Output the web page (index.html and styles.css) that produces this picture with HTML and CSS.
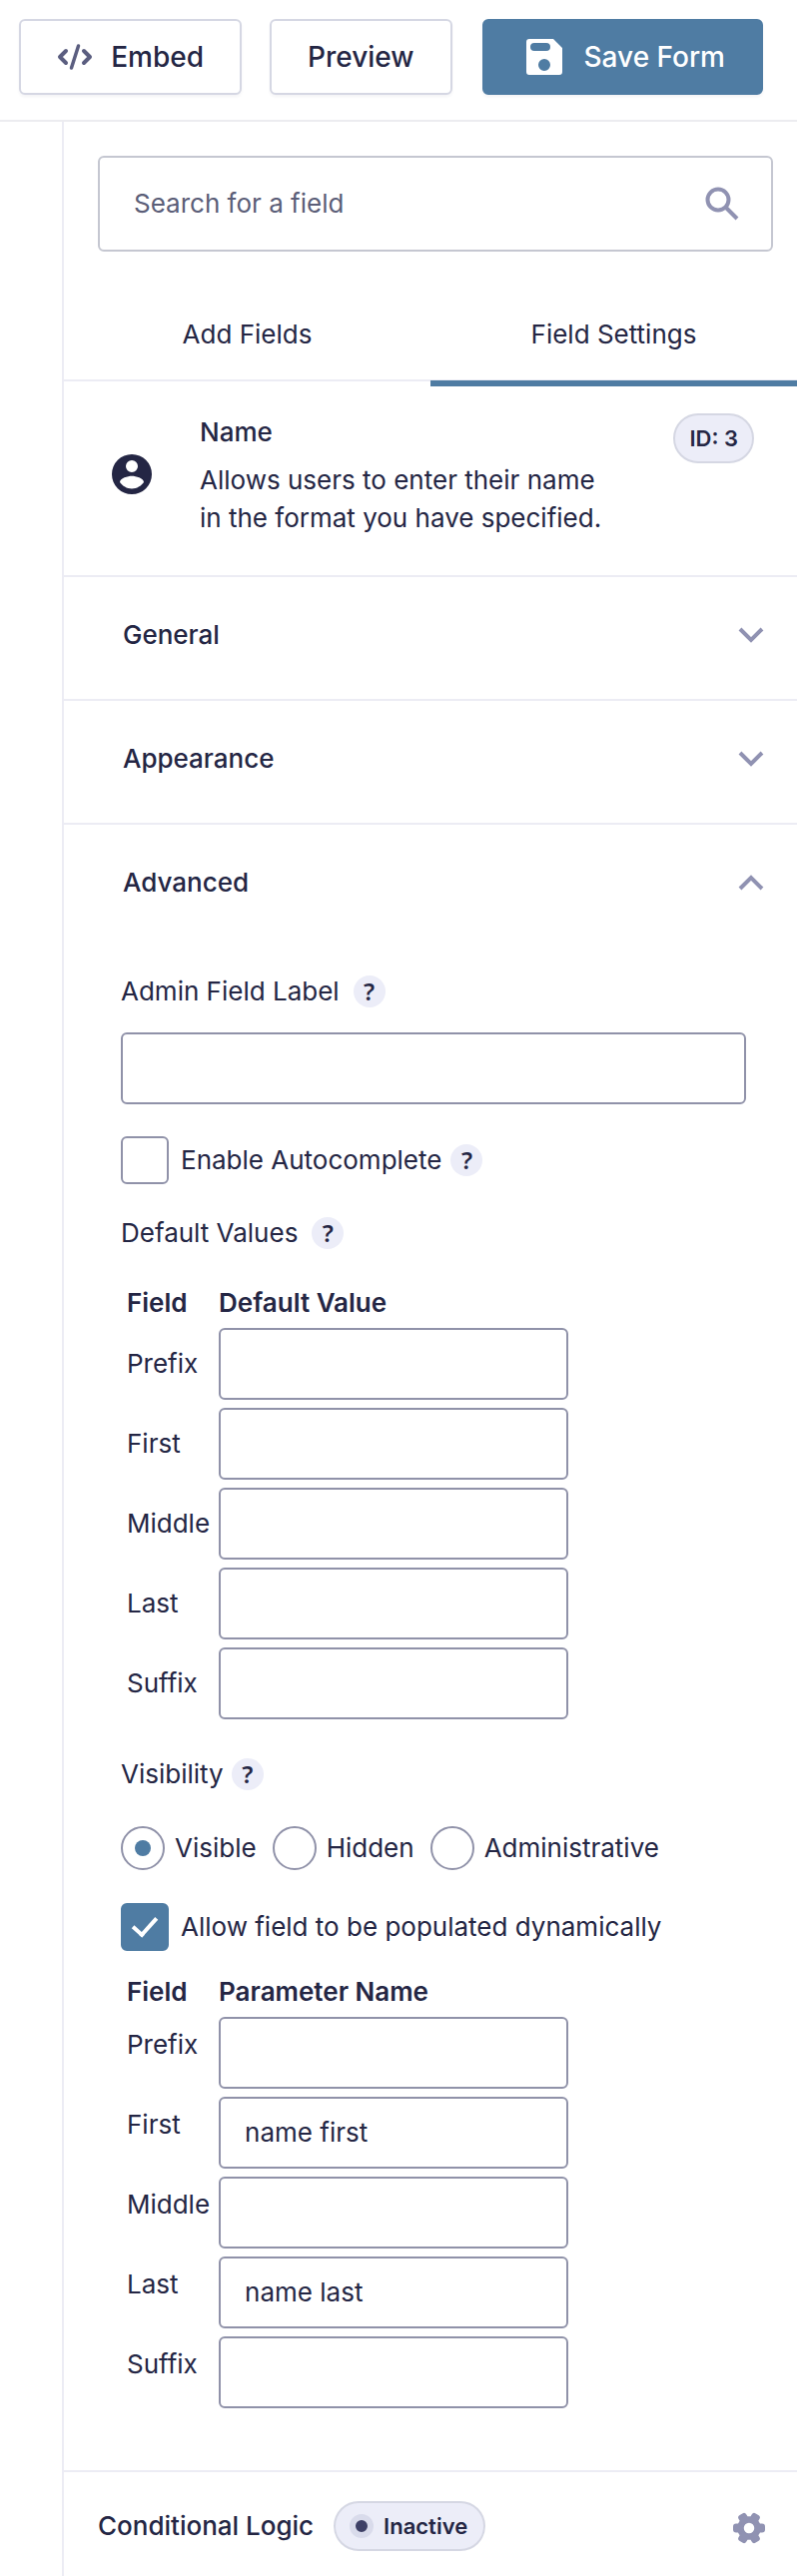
FILE: index.html
```html
<!DOCTYPE html>
<html lang="en">
<head>
<meta charset="utf-8">
<title>Form Editor</title>
<link rel="stylesheet" href="styles.css">
</head>
<body>
<header class="toolbar">
  <button type="button" class="btn btn-embed">
    <svg class="icon-code" width="36" height="28" viewBox="0 0 36 28" fill="none" stroke="currentColor" stroke-width="4" stroke-linecap="round" stroke-linejoin="round"><path d="M9 8 3 14l6 6M27 8l6 6-6 6"/><path d="M21.500 3l-7 22" stroke-width="3.500"/></svg>
    Embed
  </button>
  <button type="button" class="btn">Preview</button>
  <button type="button" class="btn btn-primary">
    <svg width="36" height="36" viewBox="0 0 36 36"><path fill="currentColor" fill-rule="evenodd" d="M3 0H27L36 9V33a3 3 0 0 1-3 3H3a3 3 0 0 1-3-3V3a3 3 0 0 1 3-3ZM8 4a4 4 0 0 0 0 8H20a4 4 0 0 0 0-8ZM18 20a6 6 0 1 0 0 12a6 6 0 0 0 0-12Z"/></svg>
    Save Form
  </button>
</header>
<main class="sidebar">
  <div class="search">
    <input type="search" class="search-input" placeholder="Search for a field" aria-label="Search for a field">
    <svg width="34" height="34" viewBox="0 0 34 34" fill="none" stroke="currentColor" stroke-width="4"><circle cx="13" cy="13" r="10.500"/><path d="M20.500 20.500 32 32"/></svg>
  </div>
  <div class="tabs" role="tablist">
    <button type="button" class="tab" role="tab" aria-selected="false">Add Fields</button>
    <button type="button" class="tab tab-active" role="tab" aria-selected="true">Field Settings</button>
  </div>
  <section class="field-info">
    <svg class="field-icon" width="40" height="40" viewBox="0 0 40 40"><path fill="currentColor" fill-rule="evenodd" d="M20 0a20 20 0 1 0 0 40a20 20 0 0 0 0-40ZM20 6a6 6 0 1 1 0 12a6 6 0 0 1 0-12ZM20 34.400c-5 0-9.400-2.600-12-6.400C8.100 24 16 21.800 20 21.800S31.900 24 32 28c-2.600 3.800-7 6.400-12 6.400Z"/></svg>
    <div class="field-text">
      <h2 class="field-name">Name</h2>
      <p class="field-desc">Allows users to enter their name in the format you have specified.</p>
    </div>
    <span class="badge">ID: 3</span>
  </section>
  <button type="button" class="section-head" aria-expanded="false">General
    <svg width="26" height="16" viewBox="0 0 26 16" fill="none" stroke="currentColor" stroke-width="4"><path d="m2 2 11 11L24 2"/></svg>
  </button>
  <button type="button" class="section-head" aria-expanded="false">Appearance
    <svg width="26" height="16" viewBox="0 0 26 16" fill="none" stroke="currentColor" stroke-width="4"><path d="m2 2 11 11L24 2"/></svg>
  </button>
  <button type="button" class="section-head" aria-expanded="true">Advanced
    <svg width="26" height="16" viewBox="0 0 26 16" fill="none" stroke="currentColor" stroke-width="4"><path d="M2 14 13 3l11 11"/></svg>
  </button>
  <section class="advanced">
    <div class="label-row">
      <label for="admin-label">Admin Field Label</label>
      <button type="button" class="help" aria-label="About Admin Field Label">?</button>
    </div>
    <input type="text" id="admin-label" class="text-input">
    <div class="check-row">
      <input type="checkbox" id="autocomplete" class="check">
      <label for="autocomplete">Enable Autocomplete</label>
      <button type="button" class="help" aria-label="About Autocomplete">?</button>
    </div>
    <div class="label-row defaults-label">
      <span>Default Values</span>
      <button type="button" class="help" aria-label="About Default Values">?</button>
    </div>
    <table class="values">
      <thead><tr><th>Field</th><th>Default Value</th></tr></thead>
      <tbody>
        <tr><td><label for="d-prefix">Prefix</label></td><td><input type="text" id="d-prefix" class="text-input"></td></tr>
        <tr><td><label for="d-first">First</label></td><td><input type="text" id="d-first" class="text-input"></td></tr>
        <tr><td><label for="d-middle">Middle</label></td><td><input type="text" id="d-middle" class="text-input"></td></tr>
        <tr><td><label for="d-last">Last</label></td><td><input type="text" id="d-last" class="text-input"></td></tr>
        <tr><td><label for="d-suffix">Suffix</label></td><td><input type="text" id="d-suffix" class="text-input"></td></tr>
      </tbody>
    </table>
    <div class="label-row visibility-label">
      <span id="visibility">Visibility</span>
      <button type="button" class="help" aria-label="About Visibility">?</button>
    </div>
    <div class="radios" role="radiogroup" aria-labelledby="visibility">
      <label class="radio-label"><input type="radio" name="visibility" class="radio" checked>Visible</label>
      <label class="radio-label"><input type="radio" name="visibility" class="radio">Hidden</label>
      <label class="radio-label"><input type="radio" name="visibility" class="radio">Administrative</label>
    </div>
    <div class="check-row">
      <input type="checkbox" id="dynamic" class="check" checked>
      <label for="dynamic">Allow field to be populated dynamically</label>
    </div>
    <table class="values parameters">
      <thead><tr><th>Field</th><th>Parameter Name</th></tr></thead>
      <tbody>
        <tr><td><label for="p-prefix">Prefix</label></td><td><input type="text" id="p-prefix" class="text-input"></td></tr>
        <tr><td><label for="p-first">First</label></td><td><input type="text" id="p-first" class="text-input" value="name first"></td></tr>
        <tr><td><label for="p-middle">Middle</label></td><td><input type="text" id="p-middle" class="text-input"></td></tr>
        <tr><td><label for="p-last">Last</label></td><td><input type="text" id="p-last" class="text-input" value="name last"></td></tr>
        <tr><td><label for="p-suffix">Suffix</label></td><td><input type="text" id="p-suffix" class="text-input"></td></tr>
      </tbody>
    </table>
  </section>
  <section class="conditional">
    <h2 class="conditional-title">Conditional Logic</h2>
    <span class="badge status"><span class="dot"></span>Inactive</span>
    <button type="button" class="gear" aria-label="Conditional Logic settings">
      <svg width="32" height="32" viewBox="0 0 32 32" fill="currentColor"><circle cx="16" cy="16" r="8.500" fill="none" stroke="currentColor" stroke-width="6.500"/><rect x="23" y="11.500" width="9" height="9" rx="3"/><rect x="23" y="11.500" width="9" height="9" rx="3" transform="rotate(60 16 16)"/><rect x="23" y="11.500" width="9" height="9" rx="3" transform="rotate(120 16 16)"/><rect x="23" y="11.500" width="9" height="9" rx="3" transform="rotate(180 16 16)"/><rect x="23" y="11.500" width="9" height="9" rx="3" transform="rotate(240 16 16)"/><rect x="23" y="11.500" width="9" height="9" rx="3" transform="rotate(300 16 16)"/></svg>
    </button>
  </section>
</main>
</body>
</html>
```
FILE: styles.css
```css
* { box-sizing: border-box; }
body {
  margin: 0;
  background: #fff;
  color: #242644;
  font: 400 26px/38px Inter, "Liberation Sans", sans-serif;
}
button, input { font: inherit; color: inherit; }
button { cursor: pointer; }
h2, p { margin: 0; }
svg { display: block; flex: none; }

.toolbar {
  display: flex;
  align-items: flex-start;
  justify-content: flex-end;
  gap: 28px;
  padding: 19px 34px 25px 16px;
  border-bottom: 2px solid #ececf0;
}
.btn {
  display: flex;
  align-items: center;
  height: 76px;
  padding: 0 36px;
  background: #fff;
  border: 2px solid #d5d7e3;
  border-radius: 6px;
  box-shadow: 0 2px 3px #2427480d;
  font-size: 28px;
  font-weight: 500;
  white-space: nowrap;
}
.btn-embed { gap: 18px; }
.icon-code { color: #5b5e80; }
.btn-primary {
  gap: 22px;
  margin-left: 2px;
  padding: 0 36px 0 42px;
  background: #4f7ca3;
  border-color: #4f7ca3;
  color: #fff;
}

.sidebar {
  margin-left: 62px;
  padding-top: 34px;
  border-left: 2px solid #ececf4;
}
.search {
  display: flex;
  align-items: center;
  height: 96px;
  margin: 0 24px 0 34px;
  padding: 0 32px 0 34px;
  border: 2px solid #c5c7d1;
  border-radius: 6px;
  color: #9092b2;
}
.search-input {
  flex: 1;
  min-width: 0;
  padding: 0;
  border: 0;
  outline: 0;
  background: none;
  color: #5b5e78;
}
.search-input::placeholder { color: #5b5e78; opacity: 1; }

.tabs {
  display: grid;
  grid-template-columns: 1fr 1fr;
  height: 130px;
  border-bottom: 2px solid #ececf4;
}
.tab {
  height: 135px;
  padding: 36px 0 0;
  border: 0;
  border-bottom: 6px solid transparent;
  background: none;
}
.tab-active { border-color: #4f7ca3; }

.field-info {
  display: flex;
  align-items: flex-start;
  height: 196px;
  padding: 32px 43px 0 48px;
  border-bottom: 2px solid #ececf4;
}
.field-icon { margin-top: 41px; }
.field-text { flex: 1; max-width: 410px; margin: 0 auto 0 48px; }
.field-name { font-size: 26px; font-weight: 500; line-height: 38px; margin-bottom: 10px; }
.badge {
  display: flex;
  align-items: center;
  height: 50px;
  padding: 0 14px;
  background: #ecedf8;
  border: 2px solid #d5d7e3;
  border-radius: 25px;
  font-size: 22px;
  font-weight: 600;
}

.section-head {
  display: flex;
  align-items: center;
  justify-content: space-between;
  width: 100%;
  height: 124px;
  padding: 0 33px 6px 59px;
  border: 0;
  border-bottom: 2px solid #ececf4;
  background: none;
  font-weight: 500;
}
.section-head[aria-expanded="true"] { border-color: transparent; }
.section-head svg { color: #9092b2; }

.advanced { padding: 24px 51px 58px 57px; }
.label-row { display: flex; align-items: center; gap: 14px; height: 38px; }
.help {
  width: 32px;
  height: 32px;
  padding: 0;
  border: 0;
  border-radius: 50%;
  background: #ecedf8;
  font-family: "Noto Sans", sans-serif;
  font-size: 24px;
  font-weight: 600;
  line-height: 30px;
}
.text-input {
  display: block;
  width: 100%;
  height: 72px;
  padding: 0 24px 2px;
  border: 2px solid #9092a9;
  border-radius: 6px;
  background: #fff;
}
.label-row + .text-input { margin-top: 22px; }
.check-row { display: flex; align-items: center; height: 48px; margin-top: 32px; }
.check, .radio {
  flex: none;
  appearance: none;
  width: 48px;
  height: 48px;
  margin: 0 12px 0 0;
  border: 2px solid #9092a9;
  border-radius: 6px;
  background: #fff;
}
.check:checked {
  display: grid;
  place-items: center;
  border-color: #4f7ca3;
  background: #4f7ca3;
}
.check:checked::before {
  content: "";
  width: 10px;
  height: 20px;
  margin-top: -6px;
  border: solid #fff;
  border-width: 0 4px 4px 0;
  transform: rotate(42deg);
}
.check-row .help { margin-left: 9px; }
.defaults-label { margin-top: 30px; }

.values { margin-top: 32px; border-spacing: 0; }
.values th { height: 40px; padding: 0 6px 2px; font-weight: 600; text-align: left; }
.values td { height: 80px; padding: 0 6px; }
.values th:last-child { padding: 0 0 2px; }
.values td:last-child { padding: 0; }
.values td:first-child { padding-right: 9px; }
.values .text-input { width: 350px; }
.parameters { margin-top: 22px; }
.parameters td { vertical-align: top; }
.parameters label { display: block; padding-top: 13px; }
.parameters .text-input { margin-top: 4px; }

.visibility-label { gap: 8px; margin-top: 32px; }
.radios { display: flex; gap: 16px; margin-top: 33px; }
.radio-label { display: flex; align-items: center; }
.radio { width: 44px; height: 44px; margin-right: 10px; border-radius: 50%; }
.radio:checked { display: grid; place-items: center; }
.radio:checked::before { content: ""; width: 16px; height: 16px; border-radius: 50%; background: #4f7ca3; }
.radios + .check-row { margin-top: 33px; }

.conditional {
  display: flex;
  align-items: center;
  height: 106px;
  padding: 4px 32px 0 34px;
  border-top: 2px solid #ececf4;
}
.conditional-title { font-size: 26px; font-weight: 500; }
.status { gap: 10px; margin-left: 20px; padding: 0 16px 0 14px; }
.dot { width: 24px; height: 24px; border: 6px solid #d9dbeb; border-radius: 50%; background: #3e4066; }
.gear { margin-left: auto; padding: 4px 0 0; border: 0; background: none; color: #9092b2; }
```
